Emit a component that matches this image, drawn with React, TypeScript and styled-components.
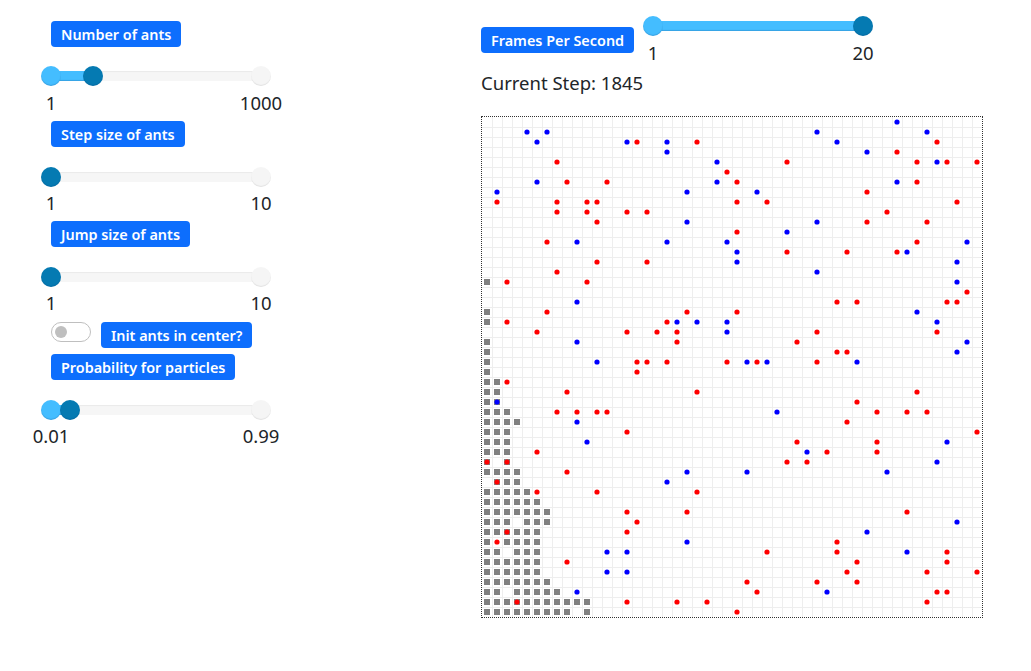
import React from "react";
import styled, { createGlobalStyle } from "styled-components";

const GlobalStyle = createGlobalStyle`
  html, body { margin: 0; padding: 0; background: #fff; }
  body { font-family: "Noto Sans", "Open Sans", "Liberation Sans", sans-serif; color: #212529; }
`;

const Page = styled.div`
  display: flex;
  align-items: flex-start;
  width: 1031px;
  height: 671px;
  overflow: hidden;
`;

const LeftPanel = styled.div`
  box-sizing: border-box;
  width: 481px;
  flex: none;
  padding: 21px 0 0 51px;
  display: flex;
  flex-direction: column;
`;

const RightPanel = styled.div`
  display: flex;
  flex-direction: column;
  padding-top: 16px;
`;

const Badge = styled.span`
  box-sizing: border-box;
  display: inline-flex;
  align-items: center;
  align-self: flex-start;
  height: 25.6px;
  padding: 1px 10px 0;
  border-radius: 4px;
  background: #0d6efd;
  color: #fff;
  font-size: 14.4px;
  font-weight: 600;
  white-space: nowrap;
`;

const Field = styled.div`
  display: flex;
  flex-direction: column;
`;

const FieldBadge = styled(Badge)`
  margin-bottom: 19.8px;
`;

const SliderBox = styled.div`
  width: 210px;
  flex: none;
`;

const Rail = styled.div`
  position: relative;
  height: 10px;
  margin: 5px 0;
  background: #f6f6f6;
  box-shadow: inset 0 1px 1px rgba(0, 0, 0, 0.05);
  border-radius: 5px;
`;

const Range = styled.div<{ $width: number }>`
  position: absolute;
  left: 0;
  top: 0;
  bottom: 0;
  width: ${(p) => p.$width}px;
  background: #44bdff;
  box-shadow: inset 0 -1px 1px rgba(0, 60, 120, 0.2);
`;

const Thumb = styled.div<{ $at: number; $kind: "start" | "end" | "idle" }>`
  position: absolute;
  top: -5px;
  left: ${(p) => p.$at - 10}px;
  width: 20px;
  height: 20px;
  border-radius: 50%;
  background: ${(p) =>
    p.$kind === "start" ? "#44bdff" : p.$kind === "end" ? "#057ab2" : "#f5f5f5"};
  box-shadow: inset 0 -1px 1px
    ${(p) => (p.$kind === "idle" ? "rgba(0,0,0,0.08)" : "rgba(0,50,110,0.2)")};
`;

const Labels = styled.div`
  display: flex;
  justify-content: space-between;
  height: 32.3px;
  padding-top: 2.5px;
`;

const Label = styled.span`
  width: 0;
  display: flex;
  justify-content: center;
  font-size: 18.5px;
  line-height: 27px;
  white-space: nowrap;
`;

const ToggleRow = styled.div`
  display: flex;
  gap: 10px;
  margin: 0.4px 0 6.6px;
`;

const Toggle = styled.div`
  box-sizing: border-box;
  width: 40px;
  height: 20px;
  padding: 3px;
  border: 1px solid #bfbfbf;
  border-radius: 10px;
  background: #fff;
`;

const Knob = styled.div`
  width: 12px;
  height: 12px;
  border-radius: 50%;
  background: #bfbfbf;
`;

const SpeedRow = styled.div`
  display: flex;
  gap: 19px;
`;

const SpeedBadge = styled(Badge)`
  margin-top: 11px;
`;

const StepText = styled.div`
  font-size: 18.5px;
  line-height: 23px;
  margin-bottom: 22.2px;
`;

const GridFrame = styled.div`
  width: 500px;
  height: 500px;
  border: 1px dotted #333;
`;

const GridSvg = styled.svg`
  display: block;
`;

type SliderProps = { to: number; min: string; max: string };

function Slider({ to, min, max }: SliderProps) {
  const idleEnd = to < 210;
  return (
    <SliderBox>
      <Rail>
        <Range $width={to} />
        {idleEnd && <Thumb $at={210} $kind="idle" />}
        {to > 0 && <Thumb $at={0} $kind="start" />}
        <Thumb $at={to} $kind="end" />
      </Rail>
      <Labels>
        <Label>{min}</Label>
        <Label>{max}</Label>
      </Labels>
    </SliderBox>
  );
}

// Per row: [row, gray columns, red columns, blue columns]
const CELLS: [number, number[], number[], number[]][] = [
  [0, [], [], [41]],
  [1, [], [], [4, 6, 33, 44]],
  [2, [], [15, 21, 45], [5, 14, 18, 35]],
  [3, [], [41], [18, 38]],
  [4, [], [7, 30, 43, 46, 49], [23, 45]],
  [5, [], [24], []],
  [6, [], [8, 12, 25, 43], [5, 23, 41]],
  [7, [], [38], [1, 20, 27]],
  [8, [], [1, 7, 10, 11, 25, 28, 47], []],
  [9, [], [7, 10, 14, 16, 40], []],
  [10, [], [11, 38, 44], [20, 33]],
  [11, [], [25], [30]],
  [12, [], [6, 43], [9, 18, 24, 48]],
  [13, [], [30, 36, 41], [25, 42]],
  [14, [], [11, 16], [25, 47]],
  [15, [], [7], [33]],
  [16, [0], [2, 10], [47]],
  [17, [], [48], []],
  [18, [], [35, 37, 46, 47], [9]],
  [19, [0], [6, 20, 25], [43]],
  [20, [0], [2, 18], [19, 21, 24, 45]],
  [21, [], [5, 14, 17, 19, 33, 45], [24]],
  [22, [0], [19, 31], [9, 48]],
  [23, [0], [35, 36], [47]],
  [24, [0], [15, 16, 18, 24, 27, 33], [11, 26, 28, 37]],
  [25, [0], [15], []],
  [26, [0, 1], [2], []],
  [27, [0, 1], [8, 21, 43], []],
  [28, [0, 1], [37], [1]],
  [29, [0, 1, 2], [7, 9, 11, 12, 39, 42, 44], [29]],
  [30, [0, 1, 2, 3], [36], [9]],
  [31, [0, 1, 2], [14, 49], []],
  [32, [0, 1, 2], [31, 39], [10, 46]],
  [33, [0, 1, 2], [5, 34, 39], [32]],
  [34, [0, 2], [0, 2, 30, 32], [45]],
  [35, [0, 1, 2, 3], [8], [20, 26, 40]],
  [36, [1, 2, 3], [1], [18]],
  [37, [0, 1, 2, 3, 4], [5, 11, 21], []],
  [38, [0, 1, 2, 3, 4, 5], [], []],
  [39, [0, 1, 2, 3, 4, 5, 6], [14, 20, 42], []],
  [40, [0, 1, 2, 4, 5, 6], [15], [47]],
  [41, [0, 1, 2, 3, 4, 5], [2, 14], [38]],
  [42, [0, 2, 3, 4, 5], [1, 35], [20]],
  [43, [0, 1, 3, 4, 5], [28, 35, 46], [12, 14, 42]],
  [44, [0, 1, 2, 3, 4, 5], [8, 37, 46], []],
  [45, [0, 1, 2, 3, 4, 5], [36, 44, 49], [12, 14]],
  [46, [0, 1, 2, 3, 4, 5, 6], [26, 33, 37], []],
  [47, [0, 1, 3, 4, 5, 6, 7], [27, 45, 46], [9, 34]],
  [48, [0, 1, 2, 3, 4, 5, 6, 7, 8, 9, 10], [3, 14, 19, 22, 44], []],
  [49, [0, 1, 2, 3, 4, 5, 6, 7, 8, 10], [25], []],
];

const LINES = Array.from({ length: 49 }, (_, i) => (i + 1) * 10);

function AntGrid() {
  return (
    <GridSvg width={500} height={500} viewBox="0 0 500 500">
      {LINES.map((p) => (
        <rect key={`v${p}`} x={p} y={0} width={1} height={500} fill="#eeeeee" />
      ))}
      {LINES.map((p) => (
        <rect key={`h${p}`} x={0} y={p} width={500} height={1} fill="#eeeeee" />
      ))}
      {CELLS.map(([r, gray]) =>
        gray.map((c) => (
          <rect key={`g${r}-${c}`} x={c * 10 + 2} y={r * 10 + 2} width={6} height={6} fill="#808080" />
        ))
      )}
      {CELLS.map(([r, , red, blue]) => (
        <React.Fragment key={r}>
          {red.map((c) => (
            <circle key={`r${c}`} cx={c * 10 + 5} cy={r * 10 + 5} r={2.6} fill="#ff0000" />
          ))}
          {blue.map((c) => (
            <circle key={`b${c}`} cx={c * 10 + 5} cy={r * 10 + 5} r={2.6} fill="#0000ff" />
          ))}
        </React.Fragment>
      ))}
    </GridSvg>
  );
}

export default function App() {
  return (
    <Page>
      <GlobalStyle />
      <LeftPanel>
        <Field>
          <FieldBadge>Number of ants</FieldBadge>
          <Slider to={42} min="1" max="1000" />
        </Field>
        <Field>
          <FieldBadge>Step size of ants</FieldBadge>
          <Slider to={0} min="1" max="10" />
        </Field>
        <Field>
          <FieldBadge>Jump size of ants</FieldBadge>
          <Slider to={0} min="1" max="10" />
        </Field>
        <ToggleRow>
          <Toggle>
            <Knob />
          </Toggle>
          <Badge>Init ants in center?</Badge>
        </ToggleRow>
        <Field>
          <FieldBadge>Probability for particles</FieldBadge>
          <Slider to={19} min="0.01" max="0.99" />
        </Field>
      </LeftPanel>
      <RightPanel>
        <SpeedRow>
          <SpeedBadge>Frames Per Second</SpeedBadge>
          <Slider to={210} min="1" max="20" />
        </SpeedRow>
        <StepText>Current Step: 1845</StepText>
        <GridFrame>
          <AntGrid />
        </GridFrame>
      </RightPanel>
    </Page>
  );
}
